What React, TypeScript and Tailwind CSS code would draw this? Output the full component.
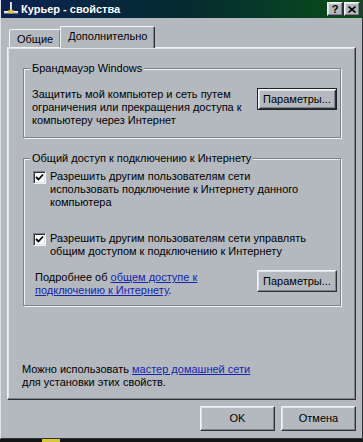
import type { ReactNode } from 'react';

// classic 3D frames
const raised =
  'border border-t-[#f2f4f6] border-l-[#f2f4f6] border-r-[#2e3135] border-b-[#2e3135] shadow-[inset_-1px_-1px_0_#7d828a,inset_1px_1px_0_#dde1e6]';
const raisedDefault =
  'border border-[#1f2124] shadow-[inset_1px_1px_0_#f2f4f6,inset_-1px_-1px_0_#2e3135,inset_2px_2px_0_#dde1e6,inset_-2px_-2px_0_#7d828a]';

function Button({ children, isDefault, className }: { children: ReactNode; isDefault?: boolean; className: string }) {
  return (
    <button
      className={`flex shrink-0 items-center justify-center bg-[#b4b9c0] text-[11px] leading-[13px] ${
        isDefault ? raisedDefault : raised
      } ${className}`}
    >
      {children}
    </button>
  );
}

function GroupBox({ title, className, children }: { title: string; className: string; children: ReactNode }) {
  return (
    <div
      className={`relative w-[318px] border border-[#7d828a] shadow-[1px_1px_0_#eef0f3,inset_1px_1px_0_#eef0f3] ${className}`}
    >
      <span className="absolute left-[6px] top-[-7px] bg-[#b4b9c0] px-[2px] leading-[13px]">{title}</span>
      {children}
    </div>
  );
}

function CheckBox() {
  return (
    <span className="mt-[1px] flex h-[13px] w-[13px] shrink-0 items-center justify-center border border-t-[#7d828a] border-l-[#7d828a] border-r-[#f2f4f6] border-b-[#f2f4f6] bg-white shadow-[inset_1px_1px_0_#2e3135,inset_-1px_-1px_0_#dde1e6]">
      <svg width="9" height="9" viewBox="0 0 9 9">
        <path d="M1 4 L3.5 6.5 L8 1.5" fill="none" stroke="#000" strokeWidth="1.8" />
      </svg>
    </span>
  );
}

function Link({ children }: { children: ReactNode }) {
  return <span className="text-[#1424b0] underline underline-offset-[1px]">{children}</span>;
}

function TitleIcon() {
  return (
    <svg width="16" height="16" viewBox="0 0 16 16">
      <rect x="7" y="1" width="2" height="9" fill="#c8ccd2" />
      <rect x="7" y="1" width="1" height="9" fill="#f0f0f0" />
      <rect x="1" y="10" width="14" height="3" fill="#c8ccd2" />
      <rect x="1" y="10" width="14" height="1" fill="#f4f4f4" />
      <rect x="1" y="12" width="14" height="1" fill="#70757c" />
      <ellipse cx="8" cy="10.5" rx="3" ry="1.8" fill="#e8c830" />
    </svg>
  );
}

function CaptionButton({ children }: { children: ReactNode }) {
  return (
    <span
      className={`flex h-[14px] w-[16px] items-center justify-center bg-[#b4b9c0] text-[11px] font-bold leading-none text-black ${raised}`}
    >
      {children}
    </span>
  );
}

export default function App() {
  return (
    <div className="relative h-[442px] w-[363px] overflow-hidden bg-[#141414] font-['Liberation_Sans',Arial,sans-serif] text-[11px] leading-[13px] text-black">
      <div className="flex h-[439px] flex-col border-r border-b border-l border-r-[#2e3135] border-b-[#2e3135] border-l-[#dde1e6] bg-[#b4b9c0]">
        {/* title bar */}
        <div className="flex h-[18px] shrink-0 items-center bg-linear-to-r from-[#0c2252] via-[#062a30] to-[#0a4e12] pl-[2px] pr-[2px]">
          <TitleIcon />
          <span className="ml-[2px] text-[11px] font-bold text-white">Курьер - свойства</span>
          <div className="ml-auto flex gap-[1px]">
            <CaptionButton>?</CaptionButton>
            <CaptionButton>
              <svg width="8" height="7" viewBox="0 0 8 7">
                <path d="M0.5 0.5 L7.5 6.5 M7.5 0.5 L0.5 6.5" stroke="#000" strokeWidth="1.6" />
              </svg>
            </CaptionButton>
          </div>
        </div>

        {/* tabs */}
        <div className="mt-[8px] flex h-[21px] items-end pl-[8px]">
          <div className="flex h-[18px] items-center rounded-tl-[2px] border-t border-l border-t-[#f2f4f6] border-l-[#f2f4f6] px-[7px] pt-[2px] shadow-[inset_-1px_0_0_#7d828a]">
            Общие
          </div>
          <div className="relative z-10 -mb-[1px] flex h-[22px] items-start rounded-t-[2px] border-t border-l border-r border-t-[#f2f4f6] border-l-[#f2f4f6] border-r-[#2e3135] bg-[#b4b9c0] px-[7px] pt-[3px] shadow-[inset_-1px_0_0_#7d828a]">
            Дополнительно
          </div>
        </div>

        {/* tab page */}
        <div className={`ml-[6px] flex h-[353px] w-[349px] flex-col pl-[15px] pt-[20px] ${raised}`}>
          <GroupBox title="Брандмауэр Windows" className="h-[70px]">
            <div className="flex items-start justify-between pl-[8px] pr-[3px] pt-[19px]">
              <p>
                Защитить мой компьютер и сеть путем
                <br />
                ограничения или прекращения доступа к
                <br />
                компьютеру через Интернет
              </p>
              <Button isDefault className="h-[22px] w-[80px]">
                Параметры...
              </Button>
            </div>
          </GroupBox>

          <GroupBox title="Общий доступ к подключению к Интернету" className="mt-[20px] h-[148px]">
            <div className="flex flex-col pl-[9px] pr-[3px] pt-[11px]">
              <div className="flex items-start gap-[4px]">
                <CheckBox />
                <p>
                  Разрешить другим пользователям сети
                  <br />
                  использовать подключение к Интернету данного
                  <br />
                  компьютера
                </p>
              </div>
              <div className="mt-[23px] flex items-start gap-[4px]">
                <CheckBox />
                <p>
                  Разрешить другим пользователям сети управлять
                  <br />
                  общим доступом к подключению к Интернету
                </p>
              </div>
              <div className="mt-[12px] flex items-start justify-between">
                <p className="ml-[2px] pt-[1px]">
                  Подробнее об <Link>общем доступе к</Link>
                  <br />
                  <Link>подключению к Интернету</Link>.
                </p>
                <Button className="h-[22px] w-[80px]">Параметры...</Button>
              </div>
            </div>
          </GroupBox>

          <p className="ml-[-1px] mt-[57px]">
            Можно использовать <Link>мастер домашней сети</Link>
            <br />
            для установки этих свойств.
          </p>
        </div>

        {/* dialog buttons */}
        <div className="mt-[6px] flex justify-end gap-[6px] pr-[6px]">
          <Button className="h-[25px] w-[75px]">OK</Button>
          <Button className="h-[25px] w-[75px]">Отмена</Button>
        </div>
      </div>
      <div className="absolute bottom-0 left-[42px] h-[3px] w-[18px] bg-[#d8c838]" />
    </div>
  );
}
